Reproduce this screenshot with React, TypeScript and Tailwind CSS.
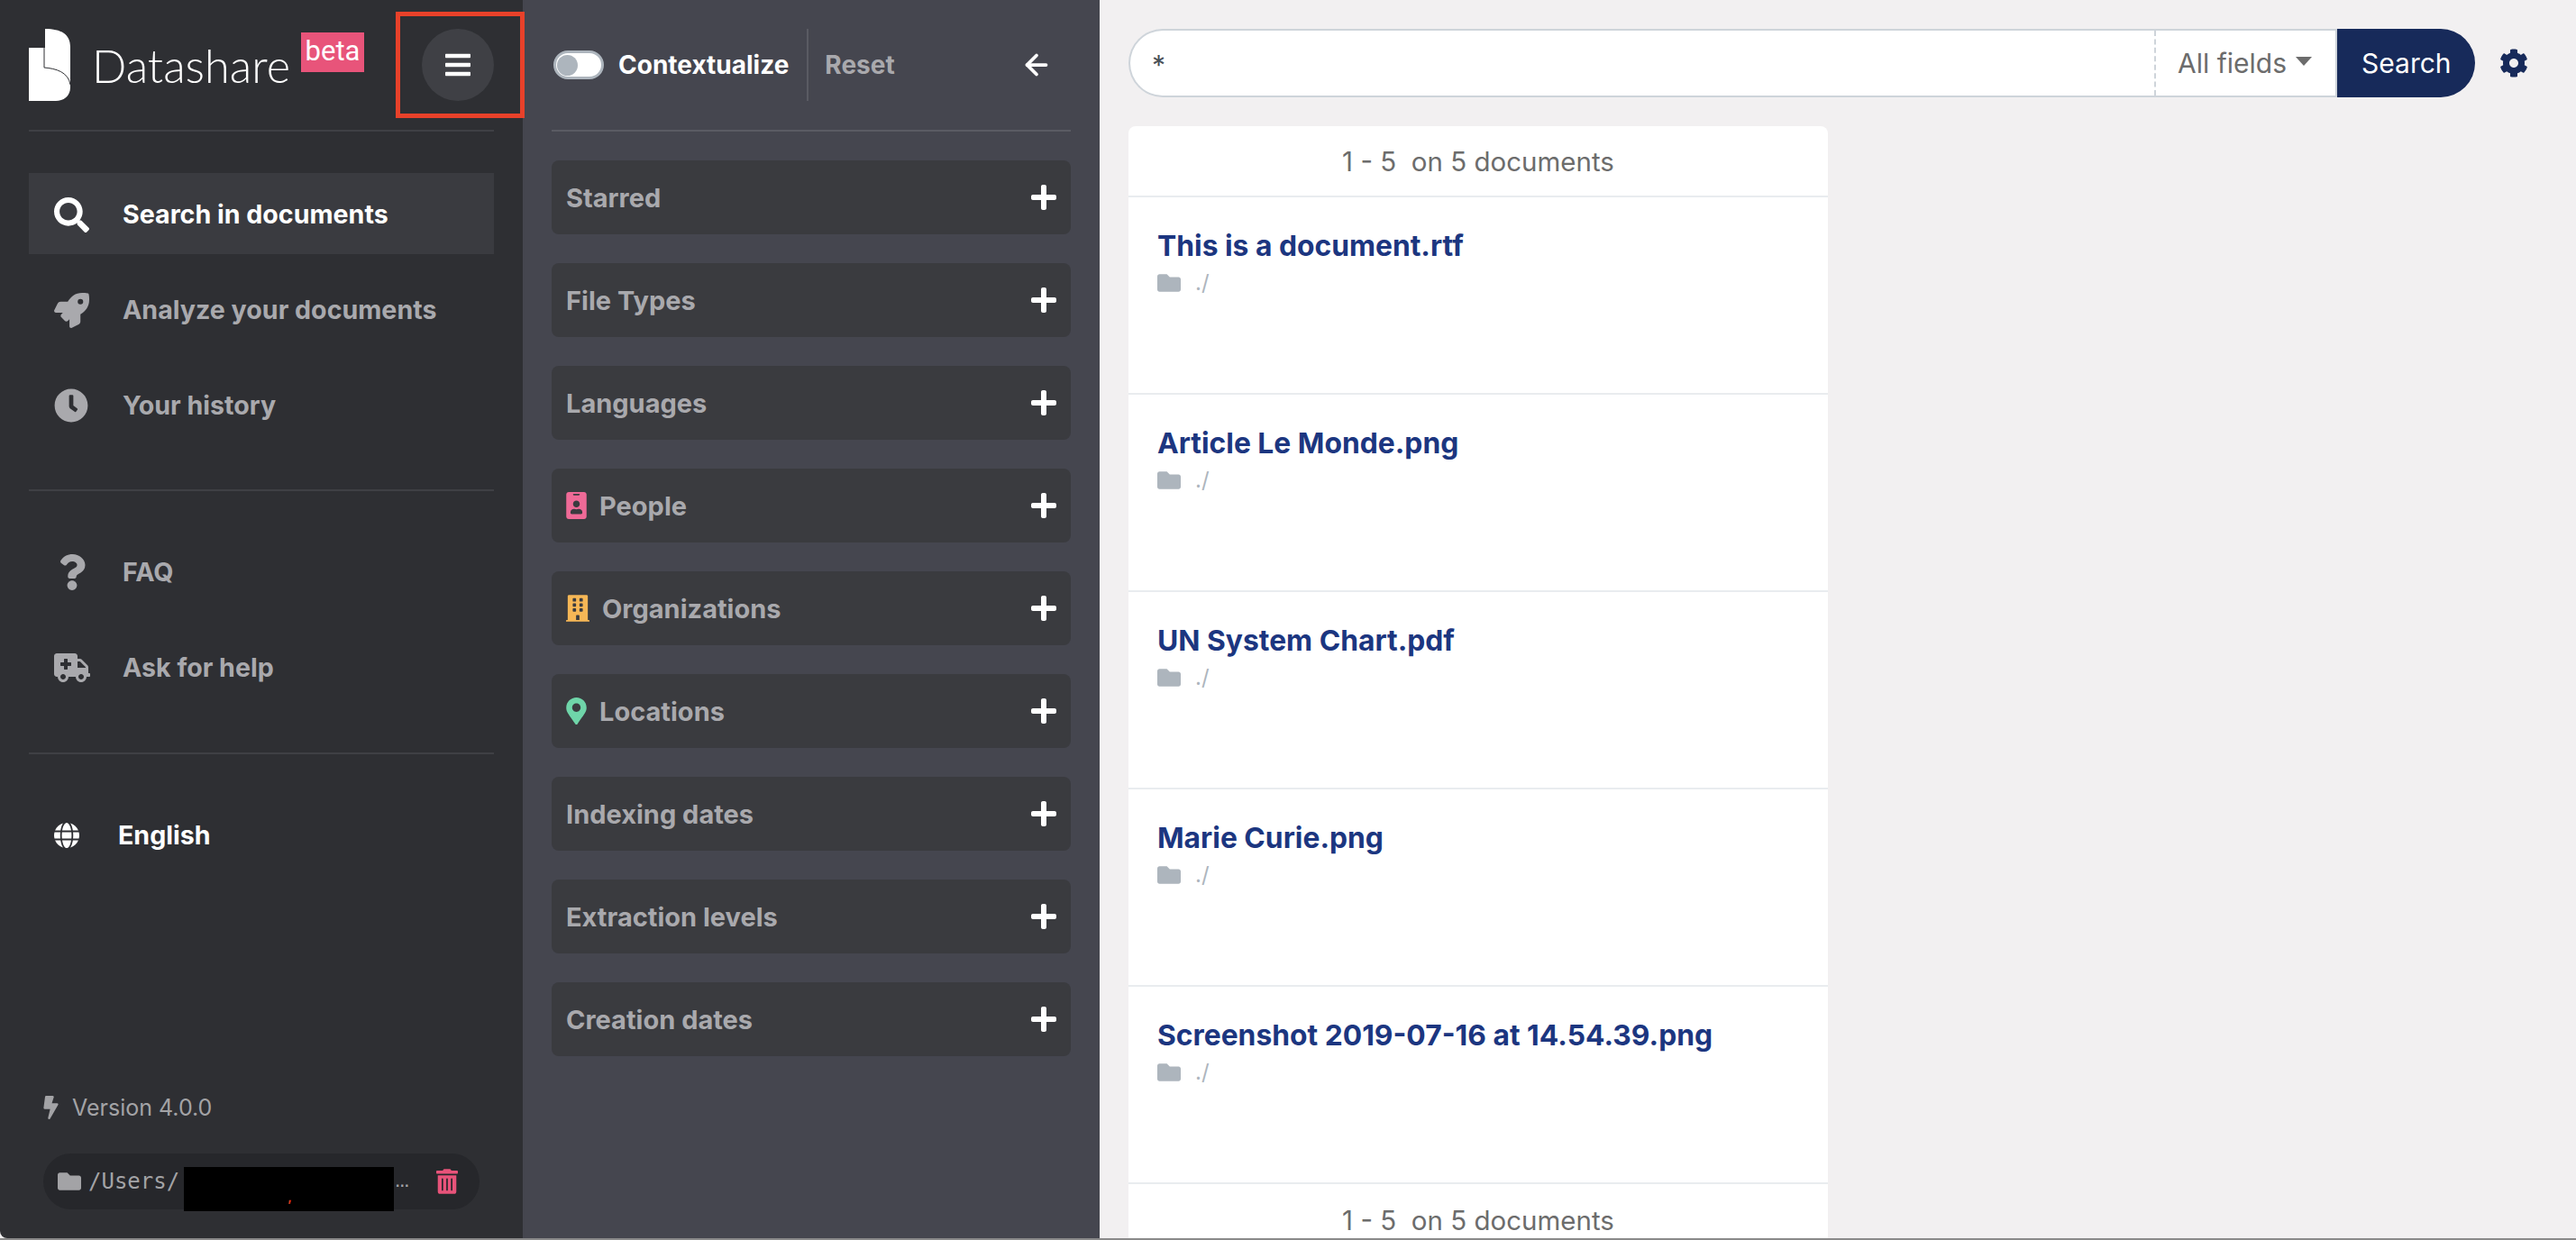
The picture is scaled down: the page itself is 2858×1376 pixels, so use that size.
import type { ComponentType, ReactNode } from 'react';
import {
  FaAmbulance,
  FaBars,
  FaBolt,
  FaBuilding,
  FaClock,
  FaCog,
  FaFolder,
  FaGlobe,
  FaIdBadge,
  FaMapMarkerAlt,
  FaPlus,
  FaQuestion,
  FaRocket,
  FaSearch,
  FaTrashAlt,
} from 'react-icons/fa';
import { ArrowLeft } from 'lucide-react';

type IconType = ComponentType<{ className?: string }>;

const mainLinks: { icon: IconType; label: string; active?: boolean; iconClass: string }[] = [
  { icon: FaSearch, label: 'Search in documents', active: true, iconClass: 'w-[39px] h-[39px]' },
  { icon: FaRocket, label: 'Analyze your documents', iconClass: 'w-[39px] h-[39px]' },
  { icon: FaClock, label: 'Your history', iconClass: 'w-[38px] h-[38px]' },
];

const helpLinks: { icon: IconType; label: string; iconClass: string }[] = [
  { icon: FaQuestion, label: 'FAQ', iconClass: 'w-[40px] h-[40px]' },
  { icon: FaAmbulance, label: 'Ask for help', iconClass: 'w-[48px] h-[38px]' },
];

const filters: { label: string; icon?: IconType; iconClass?: string }[] = [
  { label: 'Starred' },
  { label: 'File Types' },
  { label: 'Languages' },
  { label: 'People', icon: FaIdBadge, iconClass: 'w-[23px] h-[30px] text-[#ef6a97]' },
  { label: 'Organizations', icon: FaBuilding, iconClass: 'w-[26px] h-[30px] text-[#f6b756]' },
  { label: 'Locations', icon: FaMapMarkerAlt, iconClass: 'w-[23px] h-[30px] text-[#6fd5a9]' },
  { label: 'Indexing dates' },
  { label: 'Extraction levels' },
  { label: 'Creation dates' },
];

const documents = [
  'This is a document.rtf',
  'Article Le Monde.png',
  'UN System Chart.pdf',
  'Marie Curie.png',
  'Screenshot 2019-07-16 at 14.54.39.png',
];

function Logo() {
  return (
    <svg viewBox="0 0 46 80" className="w-[46px] h-[80px] shrink-0">
      <path d="M18 0C36 0 46 6 46 20V65C46 75 38 80 30 80H0V21H18Z" fill="#fff" />
      <path d="M17 21V43C30 44 44 48 46 62" fill="none" stroke="#2e2f33" strokeWidth="1" />
    </svg>
  );
}

function NavRow({ children, active }: { children: ReactNode; active?: boolean }) {
  return (
    <div className={`h-[90px] flex items-center pl-[28px] pt-[2px] text-[28.6px] font-bold ${active ? 'bg-[#3a3b40] text-white' : 'text-[#a9a9ad]'}`}>
      {children}
    </div>
  );
}

function Pagination() {
  return (
    <div className="text-center text-[#6c6c6c] text-[29.5px] leading-[40px] whitespace-pre">1 - 5  on 5 documents</div>
  );
}

export default function App() {
  return (
    <div className="relative w-[2858px] h-[1376px] overflow-hidden flex font-['Inter',sans-serif] bg-[#f2f0f1]">
      {/* Menu */}
      <aside className="w-[580px] shrink-0 bg-[#2e2f33] px-[32px] flex flex-col rounded-bl-[8px] mb-[2px]">
        <div className="h-[144px] flex items-start pt-[32px]">
          <Logo />
          <span className="ml-[24px] mt-[11px] text-[50.5px] leading-[60px] font-light text-white font-['Lato',sans-serif]">Datashare</span>
          <span className="ml-[12px] mt-[4px] w-[70px] h-[44px] bg-[#e8547a] text-white text-[31px] leading-[42px] text-center font-['Roboto',sans-serif]">beta</span>
          <div className="ml-auto w-[80px] h-[80px] rounded-full bg-[#3f4045] flex items-center justify-center text-white">
            <FaBars className="w-[28px] h-[32px]" />
          </div>
        </div>
        <div className="h-[2px] bg-[#3f4045]" />

        <nav className="mt-[46px] flex flex-col gap-4">
          {mainLinks.map((link) => (
            <NavRow key={link.label} active={link.active}>
              <span className="w-[76px] shrink-0"><link.icon className={link.iconClass} /></span>
              {link.label}
            </NavRow>
          ))}
        </nav>
        <div className="h-[2px] bg-[#3f4045] mt-[49px]" />

        <nav className="mt-[44px] flex flex-col gap-4">
          {helpLinks.map((link) => (
            <NavRow key={link.label}>
              <span className="w-[76px] shrink-0 flex justify-center pr-[36px]"><link.icon className={link.iconClass} /></span>
              {link.label}
            </NavRow>
          ))}
        </nav>
        <div className="h-[2px] bg-[#3f4045] mt-[50px]" />

        <div className="mt-[45px] h-[90px] flex items-center pl-[28px] text-white text-[28.6px] font-bold">
          <FaGlobe className="w-[28px] h-[30px] mr-[43px]" />
          English
        </div>

        <div className="mt-auto mb-[32px] px-[16px] flex flex-col">
          <div className="flex items-center text-[#a3a3a6] text-[25px] leading-[36px]">
            <FaBolt className="w-[17px] h-[26px] mr-[15px]" />
            Version 4.0.0
          </div>
          <div className="mt-[33px] h-[62px] w-[484px] rounded-full bg-[#26272b] flex items-center pl-[16px] text-[#a3a3a6]">
            <FaFolder className="w-[26px] h-[26px] mr-[8px] shrink-0" />
            <span className="font-['DejaVu_Sans_Mono',monospace] text-[24px] leading-[32px]">/Users/</span>
            <span className="relative ml-[5px] mt-[17px] w-[233px] h-[49px] bg-black shrink-0">
              <span className="absolute left-[115px] top-[26px] text-[#e03a1e] text-[14px] leading-[14px] font-bold">,</span>
            </span>
            <span className="ml-[1px] mt-[2px] font-['Liberation_Sans',sans-serif] font-bold text-[16px] leading-[20px]">…</span>
            <FaTrashAlt className="ml-[30px] w-[24px] h-[28px] text-[#e8537a] shrink-0" />
          </div>
        </div>
      </aside>

      {/* Filters */}
      <aside className="w-[640px] shrink-0 bg-[#45464f] px-[32px] mb-[2px]">
        <div className="h-[144px] flex items-center">
          <div className="w-[56px] h-[32px] rounded-full bg-white border-[3px] border-[#adb5bd] flex items-center pl-[1px] ml-[2px]">
            <div className="w-[23px] h-[23px] rounded-full bg-[#adb5bd]" />
          </div>
          <span className="ml-[16px] text-white text-[28px] font-bold">Contextualize</span>
          <div className="ml-[20px] w-[2px] h-[80px] bg-[#5a5b63]" />
          <span className="ml-[18px] text-[#a9a9ad] text-[28px] font-bold">Reset</span>
          <ArrowLeft className="ml-auto mr-[20px] w-[36px] h-[36px] text-white" strokeWidth={2.5} />
        </div>
        <div className="h-[2px] bg-[#5a5b63]" />
        <div className="mt-[32px] flex flex-col gap-[32px]">
          {filters.map((filter) => (
            <div key={filter.label} className="h-[82px] rounded-[8px] bg-[#3a3b3f] flex items-center pl-[16px] pr-[14px] text-[#a9a9ad] text-[29px] font-bold">
              {filter.icon && <filter.icon className={`${filter.iconClass} mr-[14px] shrink-0`} />}
              <span className="pt-[2px]">{filter.label}</span>
              <FaPlus className="ml-auto w-[32px] h-[32px] text-white" />
            </div>
          ))}
        </div>
      </aside>

      {/* Results */}
      <main className="flex-1 min-w-0 px-[32px] pt-[32px]">
        <div className="flex items-center">
          <div className="w-[1339px] h-[76px] flex bg-white border-2 border-[#ced4da] border-r-0 rounded-l-full text-[30px]">
            <div className="flex-1 pl-[24px] leading-[76px] text-[#495057]">*</div>
            <div className="w-[201px] border-l-2 border-dashed border-[#ced4da] flex items-center pl-[24px] text-[#6c6c6c]">
              All fields
              <span className="ml-[10px] mb-[4px] w-0 h-0 border-x-[9px] border-x-transparent border-t-[10px] border-t-[#6c6c6c]" />
            </div>
          </div>
          <div className="w-[155px] h-[76px] bg-[#172a5a] border-l-2 border-l-[#ced4da] rounded-r-full text-white text-[30px] flex items-center pl-[27px]">Search</div>
          <FaCog className="ml-[27px] w-[32px] h-[32px] text-[#172a5a]" />
        </div>

        <div className="mt-[32px] w-[776px] rounded-t-[8px] bg-white">
          <div className="h-[79px] pt-[19px] border-b-2 border-[#e9ecef]">
            <Pagination />
          </div>
          {documents.map((name) => (
            <div key={name} className="h-[219px] border-b-2 border-[#e9ecef] px-[32px] pt-[36px]">
              <div className="text-[#1c3680] text-[31.8px] leading-[36px] font-bold">{name}</div>
              <div className="mt-[7px] flex items-center text-[#adb5bd] text-[24px] leading-[32px]">
                <FaFolder className="w-[26px] h-[26px] mr-[16px]" />
                ./
              </div>
            </div>
          ))}
          <div className="pt-[20px]">
            <Pagination />
          </div>
        </div>
      </main>

      {/* Annotation around the menu toggle */}
      <div className="absolute left-[439px] top-[13px] w-[143px] h-[118px] border-[5px] border-[#e8412a]" />
      <div className="absolute left-0 right-0 bottom-0 h-[2px] bg-[#8a8a8a]" />
    </div>
  );
}
